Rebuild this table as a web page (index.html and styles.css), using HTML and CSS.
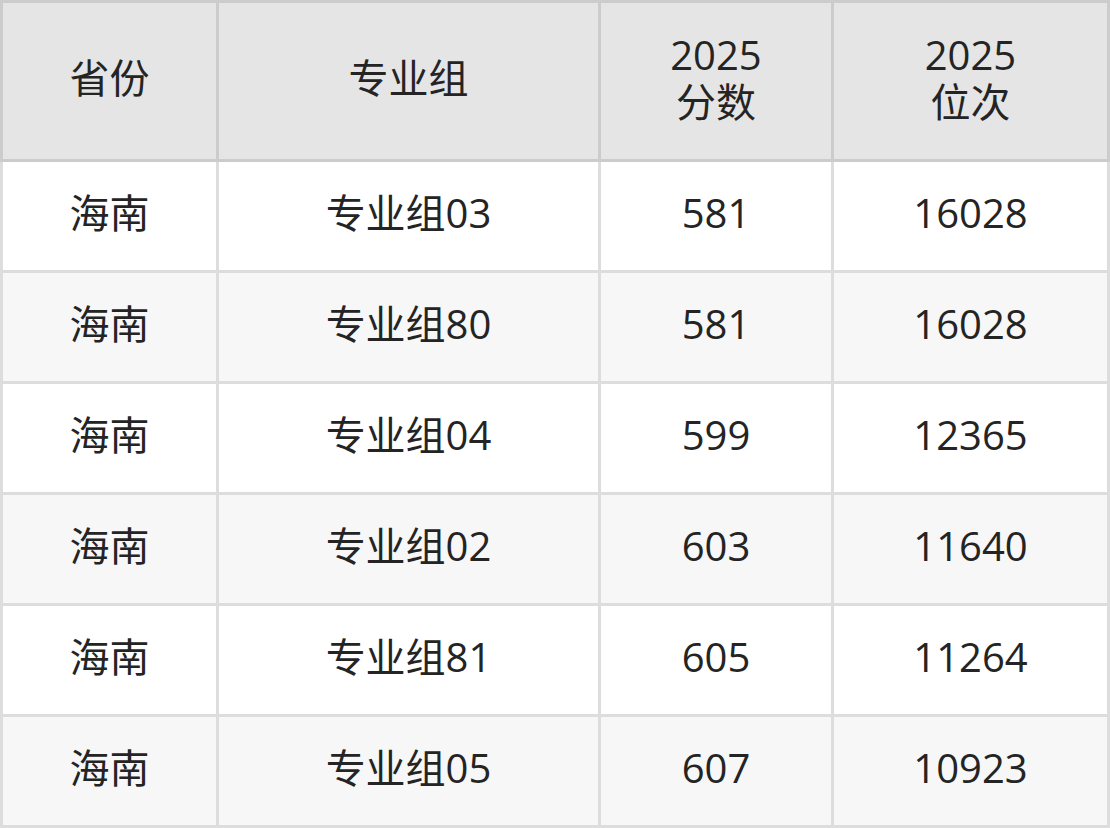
FILE: index.html
```html
<!DOCTYPE html>
<html lang="zh">
<head>
<meta charset="utf-8">
<title>分数位次</title>
<link rel="stylesheet" href="styles.css">
</head>
<body>
<div class="table">
  <div class="cell head first">省份</div>
  <div class="cell head">专业组</div>
  <div class="cell head"><span class="line">2025</span><span class="line">分数</span></div>
  <div class="cell head"><span class="line">2025</span><span class="line">位次</span></div>

  <div class="cell first">海南</div>
  <div class="cell">专业组03</div>
  <div class="cell">581</div>
  <div class="cell">16028</div>

  <div class="cell first alt">海南</div>
  <div class="cell alt">专业组80</div>
  <div class="cell alt">581</div>
  <div class="cell alt">16028</div>

  <div class="cell first">海南</div>
  <div class="cell">专业组04</div>
  <div class="cell">599</div>
  <div class="cell">12365</div>

  <div class="cell first alt">海南</div>
  <div class="cell alt">专业组02</div>
  <div class="cell alt">603</div>
  <div class="cell alt">11640</div>

  <div class="cell first">海南</div>
  <div class="cell">专业组81</div>
  <div class="cell">605</div>
  <div class="cell">11264</div>

  <div class="cell first alt">海南</div>
  <div class="cell alt">专业组05</div>
  <div class="cell alt">607</div>
  <div class="cell alt">10923</div>
</div>
</body>
</html>
```

FILE: styles.css
```css
html, body {
  margin: 0;
  padding: 0;
  background: #ffffff;
}

.table {
  display: grid;
  grid-template-columns: 219px 382px 233px 276px;
  grid-template-rows: 162px repeat(6, 111px);
  width: 1110px;
  font-family: "Open Sans", "Noto Sans CJK SC", sans-serif;
  font-size: 40px;
  color: #242424;
}

.cell {
  box-sizing: border-box;
  display: flex;
  flex-direction: column;
  align-items: center;
  justify-content: center;
  text-align: center;
  line-height: 48px;
  padding-bottom: 6px;
  background: #ffffff;
  border-right: 3px solid #dddddd;
  border-bottom: 3px solid #dddddd;
}

.line {
  display: block;
  height: 47px;
  line-height: 47px;
}

.cell.first {
  border-left: 3px solid #dddddd;
}

.cell.alt {
  background: #f7f7f7;
}

.cell.head {
  background: #e5e5e5;
  border-top: 3px solid #cccccc;
  border-right-color: #cccccc;
  border-bottom-color: #cccccc;
}

.cell.head.first {
  border-left-color: #cccccc;
}
```
